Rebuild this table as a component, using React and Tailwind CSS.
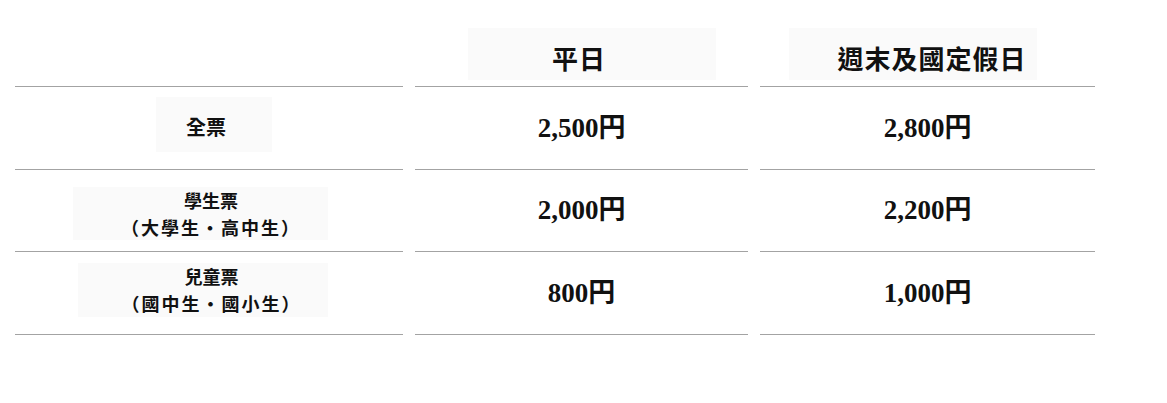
import React from 'react';

// --- 票價資料 ---
const rows = [
  {
    id: 'full',
    label: ['全票'],
    size: 'text-[20px]',
    box: 'ml-[141px] w-[116px] h-[55px] mt-[10px] pr-[16px] pt-[3px]',
    rowH: 'h-[83px]',
    weekday: '2,500',
    holiday: '2,800',
  },
  {
    id: 'student',
    label: ['學生票', '（大學生・高中生）'],
    size: 'text-[18px]',
    box: 'ml-[58px] w-[255px] h-[53px] mt-[17px] pl-[21px]',
    rowH: 'h-[82px]',
    weekday: '2,000',
    holiday: '2,200',
  },
  {
    id: 'child',
    label: ['兒童票', '（國中生・國小生）'],
    size: 'text-[18px]',
    box: 'ml-[63px] w-[250px] h-[54px] mt-[11px] pl-[17px]',
    rowH: 'h-[83px]',
    weekday: '800',
    holiday: '1,000',
  },
];

const sans = "font-['Noto_Sans_CJK_TC','Noto_Sans',sans-serif]";
const serif = "font-['Liberation_Serif','Noto_Sans_CJK_JP',serif]";

function Price({ value }) {
  return (
    <span className={`${serif} text-[27px] font-bold text-[#111] leading-none`}>
      {value}円
    </span>
  );
}

export default function App() {
  return (
    <div className="w-[1167px] h-[403px] bg-white pt-[28px] pl-[15px]">
      <div className="grid grid-cols-[388px_333px_335px] gap-x-[12px]">
        {/* --- 表頭 --- */}
        <div className="h-[59px] border-b border-[#a3a3a3]" />
        <div className="h-[59px] border-b border-[#a3a3a3]">
          <div className={`ml-[53px] w-[248px] h-[52px] bg-[#fafafa] flex items-center justify-center pr-[26px] pt-[8px] ${sans} text-[26px] font-bold text-[#111] leading-none tracking-[1px]`}>
            平日
          </div>
        </div>
        <div className="h-[59px] border-b border-[#a3a3a3]">
          <div className={`ml-[29px] w-[248px] h-[52px] bg-[#fafafa] flex items-center justify-center pl-[38px] pt-[8px] ${sans} text-[26px] font-bold text-[#111] leading-none tracking-[1px] whitespace-nowrap`}>
            週末及國定假日
          </div>
        </div>

        {/* --- 票種 --- */}
        {rows.map((row) => (
          <React.Fragment key={row.id}>
            <div className={`${row.rowH} border-b border-[#a3a3a3]`}>
              <div className={`${row.box} bg-[#fafafa] flex flex-col items-center justify-center ${sans} ${row.size} font-bold text-[#111] leading-[27px] whitespace-nowrap`}>
                {row.label.map((line, i) => (
                  <span key={i} className={i === 1 ? 'tracking-[2px]' : ''}>{line}</span>
                ))}
              </div>
            </div>
            <div className={`${row.rowH} border-b border-[#a3a3a3] flex items-center justify-center`}>
              <Price value={row.weekday} />
            </div>
            <div className={`${row.rowH} border-b border-[#a3a3a3] flex items-center justify-center`}>
              <Price value={row.holiday} />
            </div>
          </React.Fragment>
        ))}
      </div>
    </div>
  );
}
